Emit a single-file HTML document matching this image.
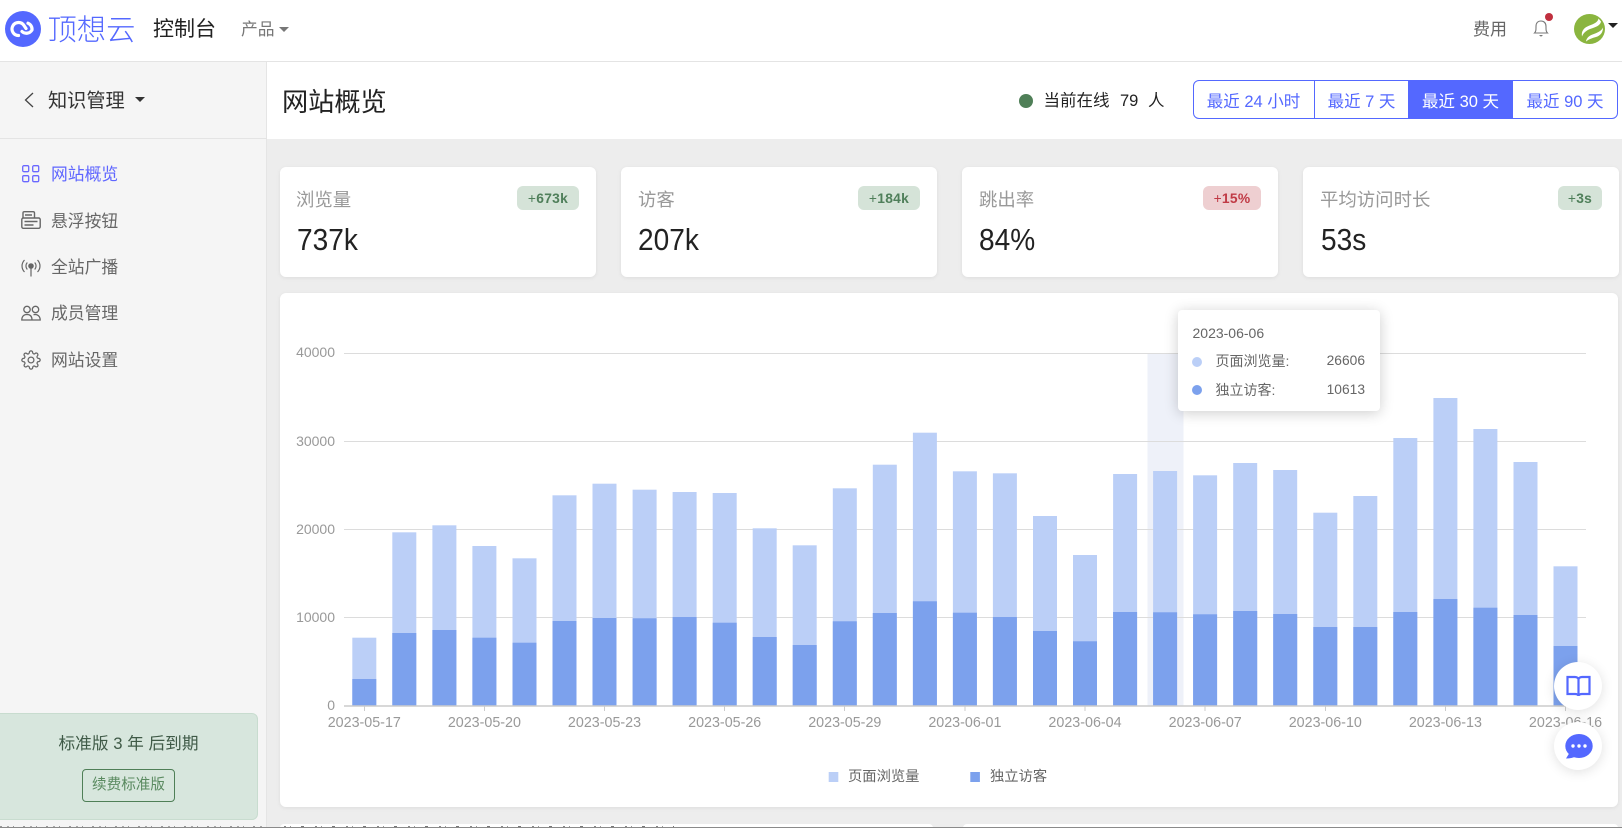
<!DOCTYPE html>
<html lang="zh"><head><meta charset="utf-8"><title>网站概览</title>
<style>
*{box-sizing:border-box}
html,body{margin:0;padding:0;width:1622px;height:828px;overflow:hidden;background:#ededed;font-family:"Liberation Sans","Noto Sans CJK SC",sans-serif;color:#333}
.a{position:absolute}
.t{position:absolute;white-space:nowrap;line-height:24px;height:24px}
.card{position:absolute;background:#fff;border-radius:6px;box-shadow:0 1px 4px rgba(0,0,0,.07)}
.lbl{font-size:18.4px;color:#999;top:188px}
.val{font-size:30.5px;color:#222;top:228px;transform:scaleX(.92);transform-origin:left center}
.bdg{position:absolute;top:187px;height:24px;border-radius:6px;font-size:13.8px;font-weight:bold;line-height:24px;text-align:center;background:#d5e3d8;color:#4f7f5a;letter-spacing:.3px}
.bdg span{font-weight:normal}
.seg{position:absolute;top:80px;height:39px;line-height:44px;text-align:center;font-size:16.5px;color:#5468ff;white-space:nowrap}
.m{font-size:16.8px;color:#666;left:51px}
.fab{position:absolute;width:48px;height:48px;border-radius:50%;background:#fff;box-shadow:0 2px 12px rgba(0,0,0,.12)}
</style></head>
<body>
<!-- header -->
<div class="a" style="left:0;top:0;width:1622px;height:62px;background:#fff;border-bottom:1.5px solid #e4e4e4"></div>
<svg class="a" style="left:5px;top:11px" width="36" height="36" viewBox="0 0 36 36"><circle cx="18" cy="18" r="18" fill="#5468ff"/><path d="M13.500 24.500a6.500 6.500 0 1 1 5.500-10l2 3" fill="none" stroke="#fff" stroke-width="3.200" stroke-linecap="round"/><path d="M17 20.500a6.500 6.500 0 0 0 10-1.500 6.500 6.500 0 0 0-4-6.800" fill="none" stroke="#fff" stroke-width="3.200" stroke-linecap="round"/></svg>
<div class="t" style="left:47.500px;top:17px;font-size:29.300px;line-height:28px;height:28px;color:#5468ff;font-weight:300">顶想云</div>
<div class="t" style="left:153px;top:18px;font-size:21px;color:#222">控制台</div>
<div class="t" style="left:241px;top:18px;font-size:16.8px;color:#777">产品</div>
<div class="a" style="left:279px;top:27px;border:5px solid transparent;border-top:5.500px solid #777;border-bottom:0"></div>
<div class="t" style="left:1473px;top:18px;font-size:17px;color:#666">费用</div>
<svg class="a" style="left:1532px;top:18px" width="18" height="20" viewBox="0 0 18 20"><path d="M2.500 15c1.500-1.500 1.500-3 1.500-6.500C4 5 6 3 9 3s5 2 5 5.500c0 3.500 0 5 1.500 6.500z" fill="none" stroke="#777" stroke-width="1.100"/><path d="M7 17h4l-2 1.800z" fill="#777"/></svg>
<div class="a" style="left:1545px;top:13px;width:8px;height:8px;border-radius:50%;background:#c0303f"></div>
<svg class="a" style="left:1574px;top:14px" width="31" height="30" viewBox="0 0 31 30"><ellipse cx="15.500" cy="15" rx="15.500" ry="15" fill="#8ab53f"/><path d="M24.500 4.500C24 8 20 10 15.500 11.500 10 13.500 7 17 8 22.500 10 17.500 14 15.500 19 14 23.500 12.500 26.500 10.500 27 7.500z" fill="#fff"/><path d="M29 13.500C27.500 17 23 19 18.500 20.500 15 21.700 12.500 24 12 27.500 15 25 18.500 24 22 23 26 21.800 29 19 29 13.500z" fill="#fff"/></svg>
<div class="a" style="left:1608px;top:23px;border:5px solid transparent;border-top:5.500px solid #222;border-bottom:0"></div>

<!-- sidebar -->
<div class="a" style="left:0;top:62px;width:267px;height:766px;background:#f5f5f5;border-right:1px solid #e5e5e5"></div>
<div class="a" style="left:0;top:138px;width:267px;height:1px;background:#e4e4e4"></div>
<svg class="a" style="left:23px;top:90px" width="12" height="20" viewBox="0 0 12 20"><path d="M10 3L2.500 10 10 17" fill="none" stroke="#444" stroke-width="1.300"/></svg>
<div class="t" style="left:48px;top:90px;font-size:19.200px;color:#333">知识管理</div>
<div class="a" style="left:135px;top:97px;border:5px solid transparent;border-top:5.500px solid #333;border-bottom:0"></div>

<svg class="a" style="left:22px;top:165px" width="18" height="18" viewBox="0 0 18 18" fill="none" stroke="#6a68ff" stroke-width="1.300"><rect x=".7" y=".7" width="6" height="6" rx="1.200"/><rect x="10.700" y=".7" width="6" height="6" rx="1.200"/><rect x=".7" y="10.700" width="6" height="6" rx="1.200"/><rect x="10.700" y="10.700" width="6" height="6" rx="1.200"/></svg>
<div class="t m" style="top:163px;color:#5f66ff">网站概览</div>
<svg class="a" style="left:21px;top:211px" width="20" height="18" viewBox="0 0 20 18" fill="none" stroke="#666" stroke-width="1.400"><path d="M2 7V2C2 1 2.500.7 3.500.7H12c1 0 1.500.3 1.500 1.300v5"/><rect x=".8" y="7" width="18.400" height="10.300" rx="1.500"/><path d="M4 4h7M3.500 10.500h13M3.500 14h9"/></svg>
<div class="t m" style="top:210px">悬浮按钮</div>
<svg class="a" style="left:21px;top:259px" width="20" height="18" viewBox="0 0 20 18" fill="none" stroke="#666" stroke-width="1.200"><circle cx="10" cy="7" r="2.200" fill="#666"/><path d="M10 8v9.500"/><path d="M6.300 3.500c-1.800 2-1.800 5 0 7M13.700 3.500c1.800 2 1.800 5 0 7M3.500 1c-3.300 3.500-3.300 8.500 0 12M16.500 1c3.300 3.500 3.300 8.500 0 12"/></svg>
<div class="t m" style="top:256px">全站广播</div>
<svg class="a" style="left:21px;top:305px" width="20" height="16" viewBox="0 0 20 16" fill="none" stroke="#666" stroke-width="1.300"><circle cx="6" cy="4.500" r="3.200"/><circle cx="14.500" cy="4.500" r="3.200"/><path d="M.8 15c0-3.500 2-5.500 5.200-5.500S11 11.500 11 15zM12.500 9.700c4-.8 6.700 1.500 6.700 5.300H11"/></svg>
<div class="t m" style="top:302px">成员管理</div>
<svg class="a" style="left:21px;top:350px" width="20" height="20" viewBox="0 0 24 24" fill="none" stroke="#666" stroke-width="1.500"><circle cx="12" cy="12" r="3.500"/><path d="M19.400 15a1.650 1.650 0 0 0 .33 1.820l.06.06a2 2 0 0 1 0 2.830 2 2 0 0 1-2.830 0l-.06-.06a1.650 1.650 0 0 0-1.820-.33 1.650 1.650 0 0 0-1 1.510V21a2 2 0 0 1-2 2 2 2 0 0 1-2-2v-.09A1.650 1.650 0 0 0 9 19.400a1.650 1.650 0 0 0-1.820.33l-.06.06a2 2 0 0 1-2.830 0 2 2 0 0 1 0-2.830l.06-.06a1.650 1.650 0 0 0 .33-1.820 1.650 1.650 0 0 0-1.510-1H3a2 2 0 0 1-2-2 2 2 0 0 1 2-2h.09A1.650 1.650 0 0 0 4.600 9a1.650 1.650 0 0 0-.33-1.820l-.06-.06a2 2 0 0 1 0-2.830 2 2 0 0 1 2.830 0l.06.06a1.650 1.650 0 0 0 1.820.33H9a1.650 1.650 0 0 0 1-1.510V3a2 2 0 0 1 2-2 2 2 0 0 1 2 2v.09a1.650 1.650 0 0 0 1 1.510 1.650 1.650 0 0 0 1.820-.33l.06-.06a2 2 0 0 1 2.830 0 2 2 0 0 1 0 2.830l-.06.06a1.650 1.650 0 0 0-.33 1.820V9a1.650 1.650 0 0 0 1.510 1H21a2 2 0 0 1 2 2 2 2 0 0 1-2 2h-.09a1.650 1.650 0 0 0-1.510 1z"/></svg>
<div class="t m" style="top:349px">网站设置</div>

<div class="a" style="left:-6px;top:713px;width:264px;height:107px;background:#d7e6dd;border:1px solid #c8dccf;border-radius:6px"></div>
<div class="t" style="left:58.500px;top:732px;font-size:16.700px;color:#3f5a47">标准版 3 年 后到期</div>
<div class="a" style="left:82px;top:769px;width:93px;height:33px;border:1px solid #4f7f57;border-radius:4px;text-align:center;line-height:31px;font-size:14.600px;color:#5a8a60;white-space:nowrap">续费标准版</div>

<!-- page title bar -->
<div class="a" style="left:267px;top:62px;width:1355px;height:77px;background:#fff"></div>
<div class="t" style="left:282px;top:86px;font-size:26.200px;line-height:32px;height:32px;color:#222">网站概览</div>
<div class="a" style="left:1019px;top:94px;width:14px;height:14px;border-radius:50%;background:#4f7f57"></div>
<div class="t" style="left:1043.500px;top:89px;font-size:16.500px;color:#222">当前在线</div>
<div class="t" style="left:1120px;top:89px;font-size:16.500px;color:#222">79</div>
<div class="t" style="left:1148px;top:89px;font-size:16.500px;color:#222">人</div>
<div class="a" style="left:1193px;top:80px;width:425px;height:39px;border:1px solid #5468ff;border-radius:6px"></div>
<div class="seg" style="left:1193px;width:122px;border-right:1px solid #5468ff">最近 24 小时</div>
<div class="seg" style="left:1315px;width:93px">最近 7 天</div>
<div class="seg" style="left:1408px;width:105px;background:#5468ff;color:#fff">最近 30 天</div>
<div class="seg" style="left:1513px;width:104px">最近 90 天</div>

<!-- stat cards -->
<div class="card" style="left:280px;top:167px;width:316px;height:110px"></div>
<div class="card" style="left:621px;top:167px;width:316px;height:110px"></div>
<div class="card" style="left:962px;top:167px;width:316px;height:110px"></div>
<div class="card" style="left:1303px;top:167px;width:316px;height:110px"></div>
<div class="t lbl" style="left:296px">浏览量</div><div class="t val" style="left:297px">737k</div><div class="bdg" style="left:517px;width:62px;top:186px;line-height:26px"><span>+</span>673k</div>
<div class="t lbl" style="left:638px">访客</div><div class="t val" style="left:638px">207k</div><div class="bdg" style="left:858px;width:62px;top:186px;line-height:26px"><span>+</span>184k</div>
<div class="t lbl" style="left:979px">跳出率</div><div class="t val" style="left:979px">84%</div><div class="bdg" style="left:1203px;width:58px;top:186px;line-height:26px;background:#eecfd1;color:#c03a45"><span>+</span>15%</div>
<div class="t lbl" style="left:1320px">平均访问时长</div><div class="t val" style="left:1321px">53s</div><div class="bdg" style="left:1558px;width:44px;top:186px;line-height:26px"><span>+</span>3s</div>

<!-- chart card -->
<div class="card" style="left:280px;top:293px;width:1338px;height:514px"></div>
<svg class="a" style="left:0;top:0" width="1622" height="828" viewBox="0 0 1622 828" font-family="Liberation Sans, Noto Sans CJK SC, sans-serif">
<rect x="1147.500" y="353" width="36" height="353" fill="#eef1f9"/>
<g stroke="#dcdcdc" stroke-width="1"><path d="M344 353.500H1586M344 441.500H1586M344 529.500H1586M344 617.500H1586"/></g>
<g fill="#bbcff7">
<rect x="352.300" y="637.700" width="24" height="68"/><rect x="392.300" y="532.300" width="24" height="173"/><rect x="432.400" y="525.300" width="24" height="180"/><rect x="472.400" y="546" width="24" height="160"/><rect x="512.500" y="558.300" width="24" height="148"/><rect x="552.500" y="495.300" width="24" height="211"/><rect x="592.500" y="483.700" width="24" height="222"/><rect x="632.600" y="489.700" width="24" height="216"/><rect x="672.600" y="492" width="24" height="214"/><rect x="712.700" y="493" width="24" height="213"/><rect x="752.700" y="528.300" width="24" height="178"/><rect x="792.700" y="545.300" width="24" height="161"/><rect x="832.800" y="488.300" width="24" height="218"/><rect x="872.800" y="464.700" width="24" height="241"/><rect x="912.900" y="432.700" width="24" height="273"/><rect x="952.900" y="471.300" width="24" height="235"/><rect x="992.900" y="473.300" width="24" height="233"/><rect x="1033" y="516" width="24" height="190"/><rect x="1073" y="555" width="24" height="151"/><rect x="1113.100" y="474" width="24" height="232"/><rect x="1153.100" y="471" width="24" height="235"/><rect x="1193.100" y="475.300" width="24" height="231"/><rect x="1233.200" y="463" width="24" height="243"/><rect x="1273.200" y="470" width="24" height="236"/><rect x="1313.300" y="512.700" width="24" height="193"/><rect x="1353.300" y="496" width="24" height="210"/><rect x="1393.300" y="438" width="24" height="268"/><rect x="1433.400" y="398" width="24" height="308"/><rect x="1473.400" y="429" width="24" height="277"/><rect x="1513.500" y="462" width="24" height="244"/><rect x="1553.500" y="566.300" width="24" height="140"/>
</g>
<g fill="#7ca1ed">
<rect x="352.300" y="679" width="24" height="27"/><rect x="392.300" y="633" width="24" height="73"/><rect x="432.400" y="630" width="24" height="76"/><rect x="472.400" y="637.700" width="24" height="68"/><rect x="512.500" y="642.700" width="24" height="63"/><rect x="552.500" y="621" width="24" height="85"/><rect x="592.500" y="618" width="24" height="88"/><rect x="632.600" y="618.300" width="24" height="88"/><rect x="672.600" y="617" width="24" height="89"/><rect x="712.700" y="622.700" width="24" height="83"/><rect x="752.700" y="637" width="24" height="69"/><rect x="792.700" y="645" width="24" height="61"/><rect x="832.800" y="621.300" width="24" height="85"/><rect x="872.800" y="613" width="24" height="93"/><rect x="912.900" y="601.300" width="24" height="105"/><rect x="952.900" y="612.700" width="24" height="93"/><rect x="992.900" y="617" width="24" height="89"/><rect x="1033" y="631" width="24" height="75"/><rect x="1073" y="641.300" width="24" height="65"/><rect x="1113.100" y="612" width="24" height="94"/><rect x="1153.100" y="612.300" width="24" height="94"/><rect x="1193.100" y="614.300" width="24" height="92"/><rect x="1233.200" y="611" width="24" height="95"/><rect x="1273.200" y="614" width="24" height="92"/><rect x="1313.300" y="627" width="24" height="79"/><rect x="1353.300" y="627" width="24" height="79"/><rect x="1393.300" y="612" width="24" height="94"/><rect x="1433.400" y="599" width="24" height="107"/><rect x="1473.400" y="607.700" width="24" height="98"/><rect x="1513.500" y="615" width="24" height="91"/><rect x="1553.500" y="646" width="24" height="60"/>
</g>
<path d="M344 706H1586" stroke="#cccccc" stroke-width="1.500"/>
<path d="M364.500 706v5M484.500 706v5M604.500 706v5M724.500 706v5M844.500 706v5M965 706v5M1085 706v5M1205 706v5M1325.500 706v5M1445.500 706v5M1565.500 706v5" stroke="#cccccc"/>
<g fill="#999" font-size="14" text-anchor="end">
<text x="335" y="357">40000</text><text x="335" y="446">30000</text><text x="335" y="534">20000</text><text x="335" y="622">10000</text><text x="335" y="710">0</text>
</g>
<g fill="#999" font-size="14.300" text-anchor="middle">
<text x="364.300" y="727">2023-05-17</text><text x="484.400" y="727">2023-05-20</text><text x="604.500" y="727">2023-05-23</text><text x="724.700" y="727">2023-05-26</text><text x="844.800" y="727">2023-05-29</text><text x="964.900" y="727">2023-06-01</text><text x="1085" y="727">2023-06-04</text><text x="1205.200" y="727">2023-06-07</text><text x="1325.300" y="727">2023-06-10</text><text x="1445.400" y="727">2023-06-13</text><text x="1565.500" y="727">2023-06-16</text>
</g>
<rect x="828.700" y="772" width="9.600" height="10" fill="#bbcff7"/>
<text x="848" y="781" font-size="14.300" fill="#666">页面浏览量</text>
<rect x="970.300" y="772" width="9.600" height="10" fill="#7ca1ed"/>
<text x="990" y="781" font-size="14.300" fill="#666">独立访客</text>
</svg>

<!-- tooltip -->
<div class="a" style="left:1178px;top:310px;width:202px;height:101px;background:#fff;border-radius:4px;box-shadow:0 2px 14px rgba(0,0,0,.2)"></div>
<div class="t" style="left:1192.500px;top:321px;font-size:14px;color:#666">2023-06-06</div>
<div class="a" style="left:1192px;top:356.500px;width:10px;height:10px;border-radius:50%;background:#bbcff7"></div>
<div class="t" style="left:1215.500px;top:349px;font-size:14px;color:#666">页面浏览量:</div>
<div class="t" style="right:257px;top:349px;font-size:13.800px;color:#666">26606</div>
<div class="a" style="left:1192px;top:385px;width:10px;height:10px;border-radius:50%;background:#7ca1ed"></div>
<div class="t" style="left:1215.500px;top:378px;font-size:14px;color:#666">独立访客:</div>
<div class="t" style="right:257px;top:378px;font-size:13.800px;color:#666">10613</div>

<!-- fabs -->
<div class="fab" style="left:1554px;top:662px"></div>
<svg class="a" style="left:1566px;top:675px" width="25" height="23" viewBox="0 0 25 23"><path d="M1.500 2H9c1.700 0 3.500 1 3.500 2.500C12.500 3 14.300 2 16 2h7.500v17H16c-1.700 0-3.500.7-3.500 2 0-1.300-1.800-2-3.500-2H1.500z" fill="none" stroke="#5468ff" stroke-width="2.200"/><path d="M12.500 4.500V21" stroke="#5468ff" stroke-width="2.200"/></svg>
<div class="fab" style="left:1554px;top:722px"></div>
<svg class="a" style="left:1565px;top:734px" width="28" height="25" viewBox="0 0 28 25"><ellipse cx="14" cy="12" rx="13.700" ry="12" fill="#5468ff"/><path d="M5 18L1 24.500c4 0 8-1 11-2.500z" fill="#5468ff"/><circle cx="8" cy="12" r="1.700" fill="#fff"/><circle cx="14" cy="12" r="1.700" fill="#fff"/><circle cx="20" cy="12" r="1.700" fill="#fff"/></svg>

<!-- bottom cards peeking -->
<div class="a" style="left:280px;top:824px;width:653px;height:4px;background:#fff;border-radius:6px 6px 0 0"></div>
<div class="a" style="left:963px;top:824px;width:655px;height:4px;background:#fff;border-radius:6px 6px 0 0"></div>
<div class="a" style="left:0;top:827px;width:1622px;height:1px;background:#8a8a8a"></div>
<div class="a" style="left:0;top:826px;width:262px;height:1px;background:repeating-linear-gradient(90deg,#999 0 2px,transparent 2px 7px,#aaa 7px 9px,transparent 9px 13px,#999 13px 14px,transparent 14px 23px)"></div>
<div class="a" style="left:284px;top:826px;width:390px;height:1px;background:repeating-linear-gradient(90deg,#888 0 2px,transparent 2px 6px,#999 6px 7px,transparent 7px 17px,#777 17px 20px,transparent 20px 31px)"></div>
</body></html>
